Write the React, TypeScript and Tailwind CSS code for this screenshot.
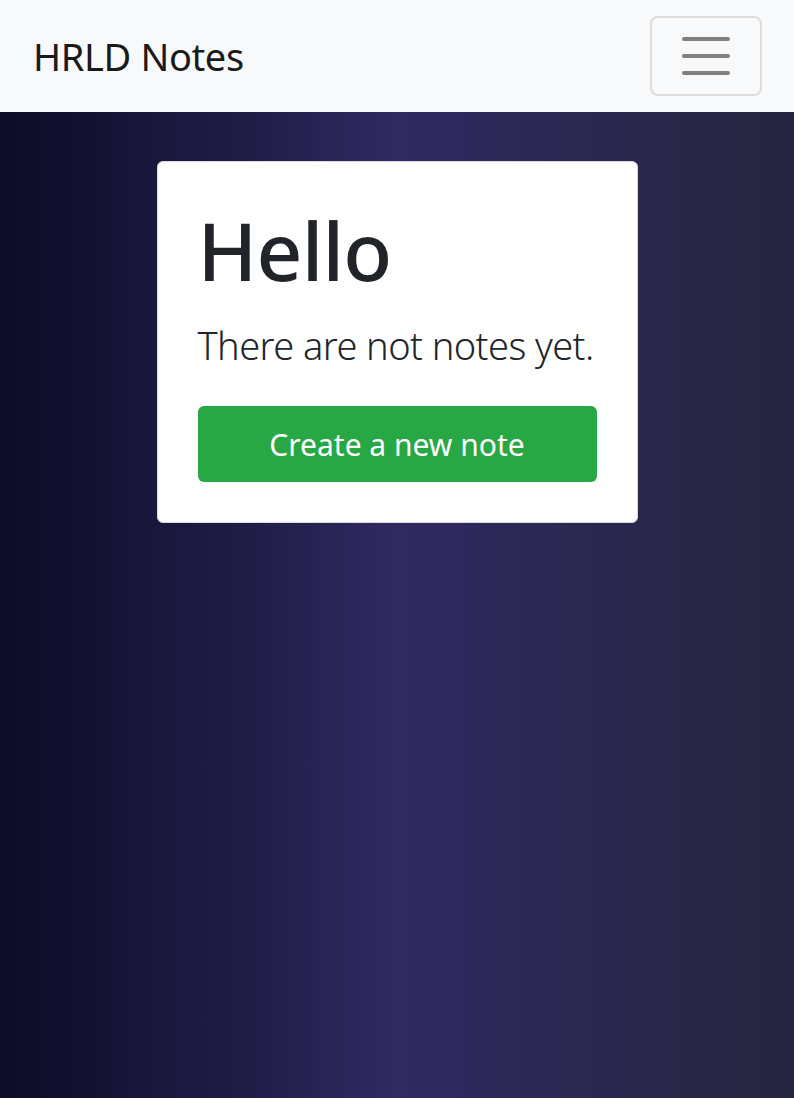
export default function App() {
  return (
    <div className="min-h-[1098px] flex flex-col font-['Noto_Sans','Open_Sans',sans-serif]">
      <nav className="h-[112px] bg-[#f8f9fa] flex items-center justify-between pl-[33px] pr-[32px]">
        <a className="text-[38px] leading-none text-[#1a1a1a] tracking-[-0.01em]">HRLD Notes</a>
        <button className="w-[112px] h-[80px] border-2 border-[#dcdcdc] rounded-[8px] flex flex-col items-center justify-center gap-[13px]">
          <span className="block w-[48px] h-[4px] rounded-full bg-[#808081]" />
          <span className="block w-[48px] h-[4px] rounded-full bg-[#808081]" />
          <span className="block w-[48px] h-[4px] rounded-full bg-[#808081]" />
        </button>
      </nav>
      <main className="flex-1 bg-[linear-gradient(90deg,#0d0b27_0%,#22204c_35%,#312a63_50%,#2b2854_68%,#25253f_100%)] pt-[49px]">
        <div className="mx-auto w-[481px] bg-white border border-[#dcdcdc] rounded-[6px] p-10">
          <h1 className="text-[80px] leading-[96px] font-medium text-[#212529] mb-[17px] tracking-[-0.01em]">Hello</h1>
          <p className="text-[38px] leading-[60px] font-light text-[#212529] mb-[31px] whitespace-nowrap tracking-[-0.015em]">There are not notes yet.</p>
          <button className="w-full h-[76px] bg-[#28a745] rounded-[6px] text-white text-[30px]">Create a new note</button>
        </div>
      </main>
    </div>
  );
}
